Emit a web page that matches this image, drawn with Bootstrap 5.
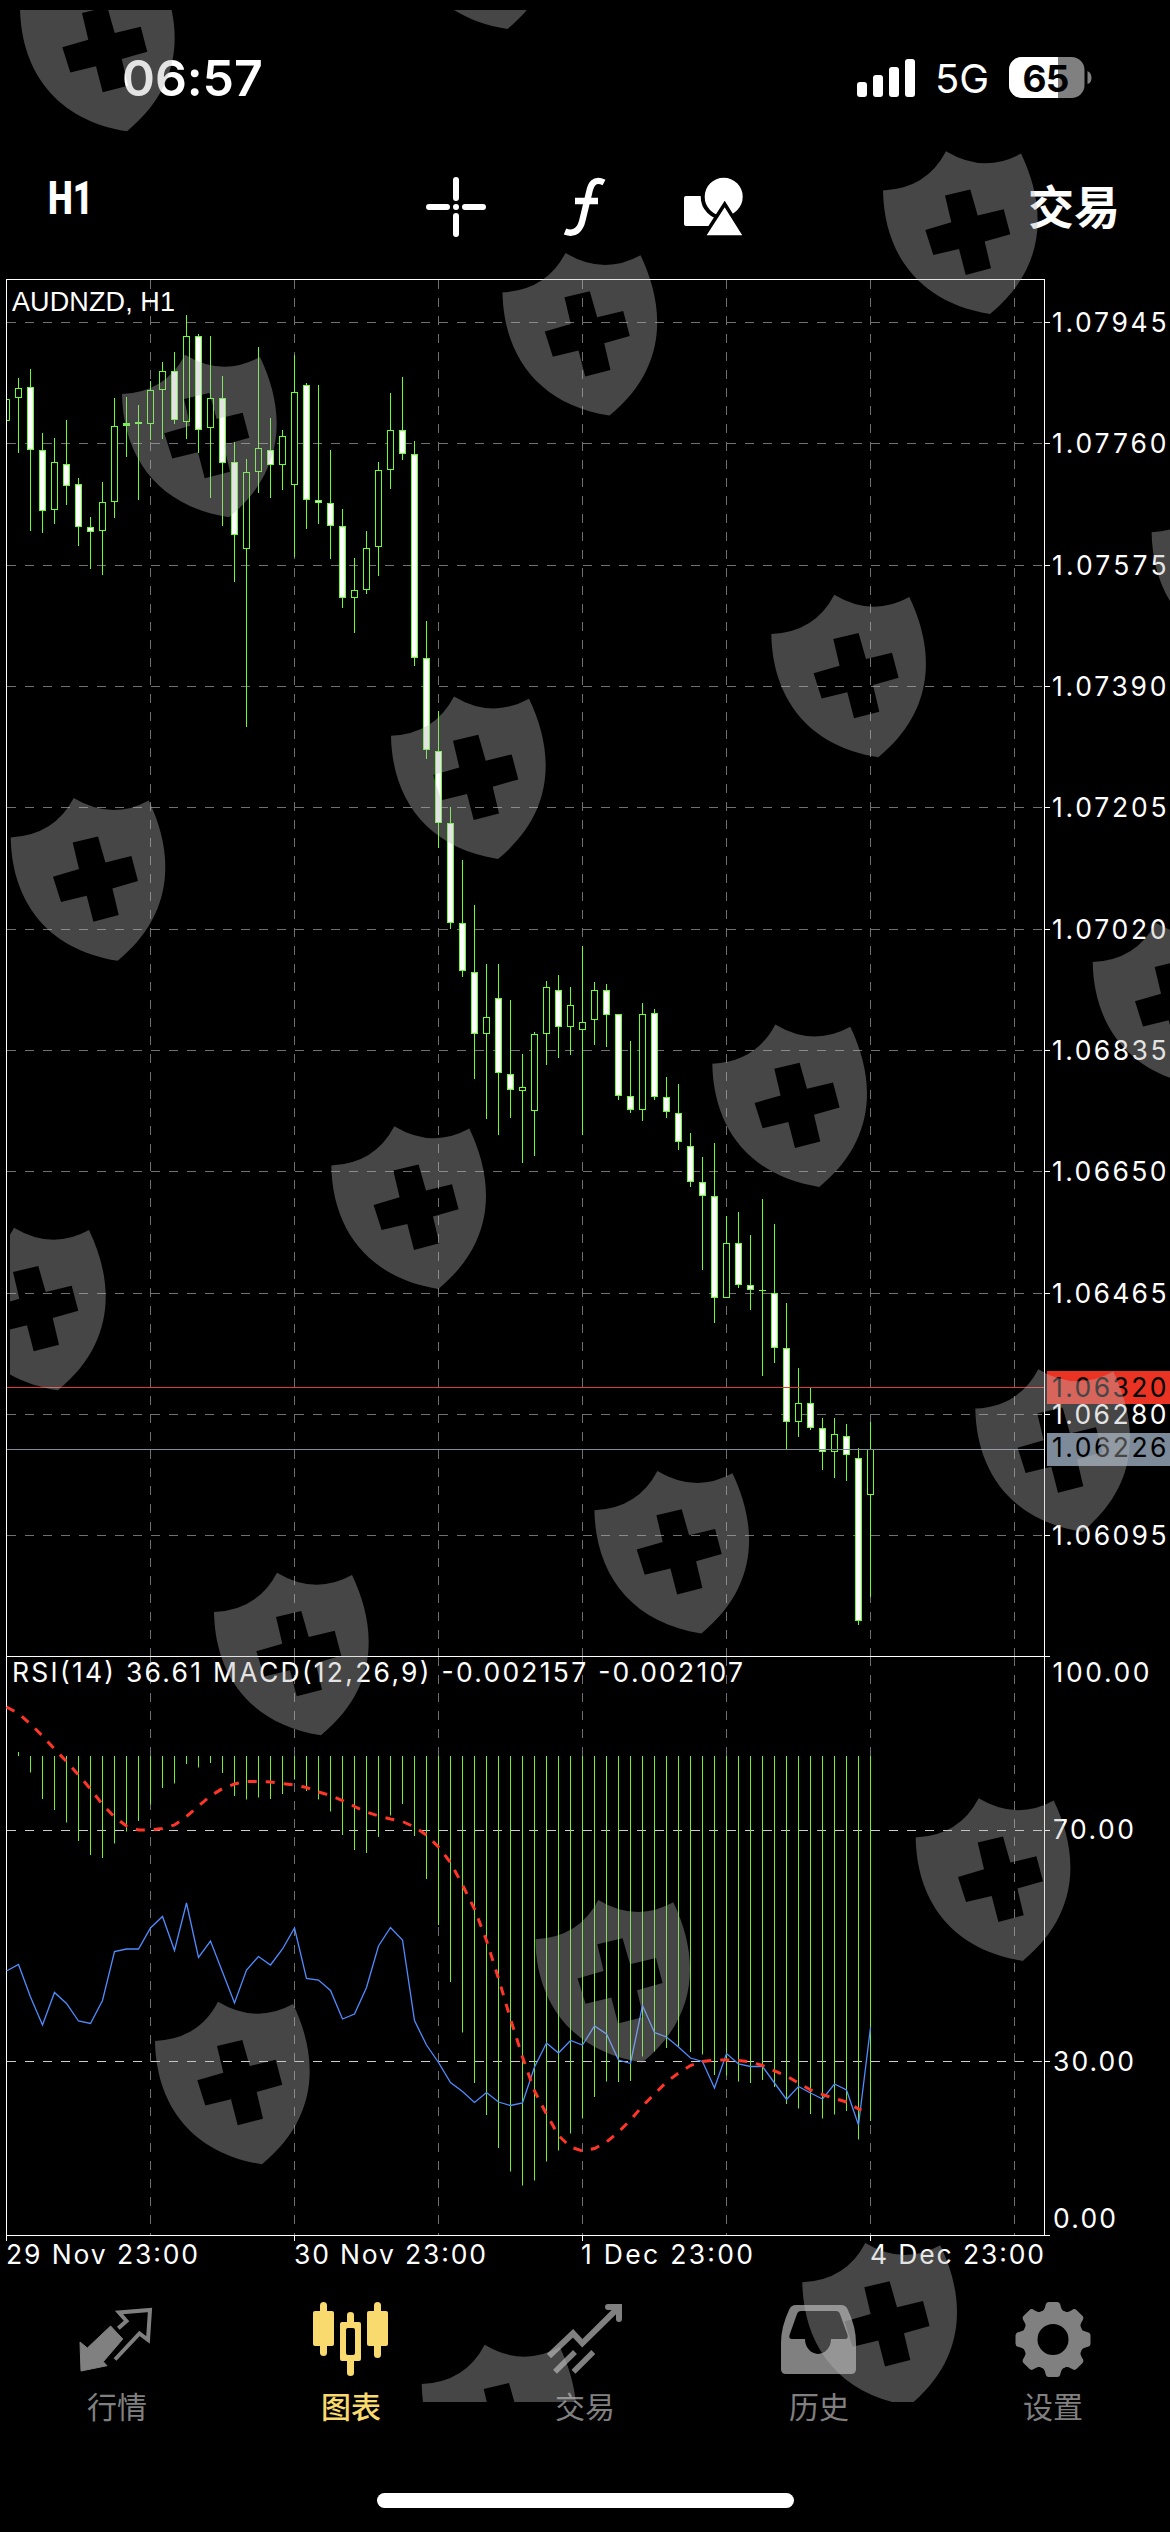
<!DOCTYPE html>
<html lang="zh-CN">
<head>
    <meta charset="UTF-8">
    <meta name="viewport" content="width=device-width, initial-scale=1.0">
    <title>AUDNZD, H1</title>
    <!-- Bootstrap CSS -->
    <link href="https://cdn.jsdelivr.net/npm/bootstrap@5.3.0/dist/css/bootstrap.min.css" rel="stylesheet">
    <style>
        body {
            width: 1170px;
            height: 2532px;
            background: #000;
            color: #fff;
            font-family: Inter, "Noto Sans CJK SC", sans-serif;
            overflow: hidden;
        }
        .status-bar {
            height: 140px;
            padding: 16px 78px 0 122px;
        }
        .clock {
            font-size: 50px;
            font-weight: 600;
            line-height: 1;
            letter-spacing: -0.1px;
        }
        .network {
            font-size: 40px;
            line-height: 1;
        }
        .toolbar {
            height: 134px;
            padding: 0 50px 0 48px;
        }
        .period {
            display: block;
            margin-top: -20px;
            overflow: visible;
        }
        .tools {
            gap: 69px;
            margin-left: 3px;
        }
        .trade-link {
            font-size: 46px;
            font-weight: 700;
            line-height: 1;
            color: #fff;
            text-decoration: none;
        }
        .chart-area {
            height: 2002px;
        }
        .chart-area svg {
            display: block;
        }
        .chart-area text {
            font-size: 26.5px;
            fill: #fff;
        }
        .chart-area .symbol-name {
            font-family: "Liberation Sans", sans-serif;
            font-size: 27px;
        }
        .chart-area .tag-text {
            fill: #000;
        }
        .tab-bar {
            height: 164px;
            padding-top: 25px;
        }
        .tab-bar a {
            width: 234px;
            color: #808080;
            font-size: 30px;
            line-height: 1;
            text-decoration: none;
            gap: 13px;
        }
        .tab-bar a.active {
            color: #f8da6f;
        }
        .tab-bar a.active span {
            font-weight: 500;
        }
        .home-bar {
            width: 417px;
            height: 15px;
            margin-top: 53px;
            background: #fff;
        }
        .shield-layer {
            left: 0;
            top: 0;
            pointer-events: none;
        }
    </style>
</head>
<body class="position-relative d-flex flex-column">
    <!-- Status Bar -->
    <div class="status-bar d-flex align-items-center justify-content-between">
        <div class="clock">06:57</div>
        <div class="d-flex align-items-center">
            <svg width="58" height="38" viewBox="0 0 58 38" fill="#fff" class="me-3">
                <rect x="0" y="23" width="10" height="15" rx="3"/>
                <rect x="16" y="16" width="10" height="22" rx="3"/>
                <rect x="32" y="8" width="10" height="30" rx="3"/>
                <rect x="48" y="0" width="10" height="38" rx="3"/>
            </svg>
            <svg width="58" height="50" viewBox="0 -6 58 50" class="ms-1 me-3"><text class="network" x="0" y="34" fill="#fff" textLength="54">5G</text></svg>
            <svg width="83" height="42" viewBox="0 0 83 42">
                <defs><clipPath id="cell"><rect width="75.500" height="41" rx="13"/></clipPath></defs>
                <g clip-path="url(#cell)">
                    <rect width="76" height="41" fill="#808080"/>
                    <rect width="49" height="41" fill="#fff"/>
                </g>
                <path d="M78.500 14q4 2 4 7t-4 6z" fill="#808080"/>
                <text x="37" y="34.500" font-size="37" font-weight="700" text-anchor="middle" textLength="47" fill="#000">65</text>
            </svg>
        </div>
    </div>

    <!-- Chart Toolbar -->
    <div class="toolbar d-flex align-items-center justify-content-between">
        <svg class="period" width="90" height="36"><text x="0" y="35" font-family="Roboto" font-weight="900" font-size="47" textLength="45" lengthAdjust="spacingAndGlyphs" fill="#fff">H1</text></svg>
        <div class="tools d-flex align-items-center">
            <svg width="60" height="60" viewBox="0 0 60 60" stroke="#fff" stroke-width="6" stroke-linecap="round">
                <path d="M30 3v18M30 39v18M3 30h18M39 30h18M30 30h.01"/>
            </svg>
            <svg width="60" height="60" viewBox="-9 0 60 60" fill="none" stroke="#fff" stroke-width="6.400">
                <path d="M40 5.500C30 .5 26.500 8 25 16L18.500 43C16.500 52 11 58.500 1 54.500M11 24h23"/>
            </svg>
            <svg width="60" height="60" viewBox="0 -1 60 60" fill="#fff" stroke="#000">
                <rect x="0" y="18" width="31" height="30" rx="2" stroke="none"/>
                <circle cx="39.700" cy="18.700" r="21" stroke-width="4"/>
                <path d="M41.300 26L20 59H62z" stroke-width="3.500" transform="translate(-.6 0)"/>
            </svg>
        </div>
        <a href="#" class="trade-link">交易</a>
    </div>

    <!-- Chart -->
    <div class="chart-area">
        <svg id="chart" width="1170" height="2002" viewBox="0 274 1170 2002"></svg>
    </div>

    <!-- Tab Bar -->
    <nav class="tab-bar d-flex">
        <a href="#" class="d-flex flex-column align-items-center">
            <svg width="76" height="78" viewBox="0 0 76 78">
                <path fill="currentColor" d="M31.600 25l12.200 13-19.500 22.700L28 64.700 2 70 1 41l7.300 6z" stroke="currentColor" stroke-width="1" stroke-linejoin="round"/>
                <path fill="none" stroke="currentColor" stroke-width="4" d="M39.300 27.300l8.200-7.300L40 11.500 71 9l-2 30-8.500-6.500L36 58.500"/>
            </svg>
            <span>行情</span>
        </a>
        <a href="#" class="active d-flex flex-column align-items-center">
            <svg width="76" height="78" viewBox="0 0 76 78" fill="currentColor">
                <rect x="0" y="10" width="21" height="35" rx="2"/>
                <rect x="7" y="1" width="7" height="54" rx="3.500"/>
                <rect x="54" y="10" width="21" height="35" rx="2"/>
                <rect x="61" y="1" width="7" height="56" rx="3.500"/>
                <path fill-rule="evenodd" d="M29 21h17q2 0 2 2v35q0 2-2 2H29q-2 0-2-2V23q0-2 2-2zm6 6q-2 0-2 2v23q0 2 2 2h5q2 0 2-2V29q0-2-2-2z"/>
                <path d="M34 22v-8q0-3 3.500-3t3.500 3v8zM34 60v12q0 3 3.500 3t3.500-3V60z"/>
            </svg>
            <span>图表</span>
        </a>
        <a href="#" class="d-flex flex-column align-items-center">
            <svg width="76" height="78" viewBox="0 0 76 78" fill="none" stroke="currentColor" stroke-width="6">
                <path d="M2 55l24-22.700 9.300 10L71 7"/>
                <path d="M61 6h11v12" stroke-linecap="round" stroke-linejoin="miter"/>
                <path d="M28 51L8 70.700M46.300 51L26.500 70.700" stroke-width="5.500"/>
            </svg>
            <span>交易</span>
        </a>
        <a href="#" class="d-flex flex-column align-items-center">
            <svg width="76" height="78" viewBox="0 0 76 78">
                <path fill="currentColor" fill-rule="evenodd" d="M15 4H60Q65 4 67 9Q75 26 75 42V68Q75 73 70 73H5Q0 73 0 68V42Q0 26 8 9Q10 4 15 4ZM20 10Q17 10 16 13L8.500 34Q7.500 38 11 38H24A13 15 0 0 0 50 38H64Q67.500 38 66.500 34L59 13Q58 10 55 10Z"/>
            </svg>
            <span>历史</span>
        </a>
        <a href="#" class="d-flex flex-column align-items-center">
            <svg width="76" height="78" viewBox="-38 -38.500 76 78">
                <circle r="23" fill="none" stroke="currentColor" stroke-width="15"/>
                <g fill="currentColor">
                    <path id="tooth" d="M-12-27Q-8.500-29-7.500-34Q-7-37.500-4-37.500H4Q7-37.500 7.500-34Q8.500-29 12-27L10-20H-10z"/>
                    <use href="#tooth" transform="rotate(45)"/>
                    <use href="#tooth" transform="rotate(90)"/>
                    <use href="#tooth" transform="rotate(135)"/>
                    <use href="#tooth" transform="rotate(180)"/>
                    <use href="#tooth" transform="rotate(225)"/>
                    <use href="#tooth" transform="rotate(270)"/>
                    <use href="#tooth" transform="rotate(315)"/>
                </g>
            </svg>
            <span>设置</span>
        </a>
    </nav>
    <div class="home-bar rounded-pill mx-auto"></div>

    <!-- Shield overlay, lies over the whole screen -->
    <svg id="shields" class="shield-layer position-absolute" width="1170" height="2532">
        <defs>
            <clipPath id="shieldClip"><rect x="10" y="10" width="1160" height="2392"/></clipPath>
            <path id="shield" fill-rule="evenodd" d="M0 0Q43.700-2 63-39.300Q101-16.500 138-37C162.500 14 166 75 107 123.300C35 112 1 62 0 0ZM62 5L68.300 31.700 42.300 39.300 50.300 64.500 76 58.300 82.700 84.300 108 77.700 101.700 51 127.300 43.700 120.700 18.700 94.700 25 87.300-1Z"/>
        </defs>
        <g id="shieldGroup" clip-path="url(#shieldClip)" fill="#b6b6b6" fill-opacity="0.385"></g>
    </svg>

    <!-- Bootstrap JS -->
    <script src="https://cdn.jsdelivr.net/npm/bootstrap@5.3.0/dist/js/bootstrap.bundle.min.js"></script>
    <script>
        const NS = 'http://www.w3.org/2000/svg';
        const chart = document.getElementById('chart');

        function add(parent, name, attrs, text) {
            const el = document.createElementNS(NS, name);
            for (const key in attrs) el.setAttribute(key, attrs[key]);
            if (text) el.textContent = text;
            parent.appendChild(el);
            return el;
        }

        function line(x1, y1, x2, y2, color, dash) {
            const attrs = { x1, y1, x2, y2, stroke: color, 'stroke-width': 1 };
            if (dash) attrs['stroke-dasharray'] = dash;
            add(chart, 'line', attrs);
        }

        // x position of bar number i
        const barX = i => 6.5 + 12 * i;

        // [high, body top, body bottom, low, filled]
        const candles = [
            [399,399,421,421,0],[378,388,398,453,0],[369,387,450,531,1],[433,450,511,533,1],[438,462,510,524,0],
            [420,464,486,505,1],[478,484,527,546,1],[517,527,532,569,1],[482,502,531,575,0],[398,426,502,518,0],
            [397,423,426,457,2],[405,422,424,500,2],[381,390,424,440,0],[362,371,390,439,0],[352,371,420,424,1],
            [315,336,422,439,0],[334,336,430,453,1],[336,398,428,498,0],[376,398,463,526,1],[442,462,535,582,1],
            [459,472,549,727,0],[347,448,472,493,0],[418,450,465,498,1],[430,436,465,490,0],[355,392,485,557,0],
            [383,385,500,529,1],[385,500,503,524,1],[450,503,526,559,1],[509,526,598,608,1],[558,590,598,633,0],
            [531,548,590,594,0],[462,470,547,576,0],[393,430,470,489,0],[377,430,454,460,1],[441,454,658,666,1],
            [621,658,750,759,1],[711,751,823,848,1],[807,823,923,929,1],[860,923,971,977,1],[905,972,1034,1079,1],
            [964,1017,1034,1119,0],[964,998,1073,1135,1],[1000,1074,1090,1118,1],[1054,1087,1091,1163,0],[1032,1034,1111,1156,0],
            [981,987,1034,1065,0],[975,990,1027,1058,1],[987,1005,1027,1055,0],[946,1022,1030,1135,0],[982,990,1020,1045,0],
            [984,990,1015,1047,1],[1014,1014,1096,1100,1],[1041,1096,1110,1113,1],[1003,1014,1110,1121,0],[1009,1013,1097,1100,1],
            [1077,1097,1112,1118,1],[1084,1113,1142,1150,1],[1133,1146,1182,1187,1],[1157,1182,1196,1270,1],[1143,1196,1298,1323,1],
            [1216,1243,1298,1298,0],[1212,1243,1285,1288,1],[1235,1285,1290,1310,1],[1199,1290,1291,1376,2],[1224,1293,1348,1363,1],
            [1303,1348,1422,1450,1],[1368,1403,1422,1437,0],[1388,1403,1428,1430,1],[1418,1428,1452,1470,1],[1418,1434,1452,1478,0],
            [1424,1436,1455,1481,1],[1448,1458,1621,1625,1],[1422,1449,1495,1597,0]
        ];

        // Bottom ends of the MACD bars, starting from bar 1
        const macd = [
            1752,1772.5,1799,1810,1822.5,1841,1855,1858,1843.5,1831.5,1821,1804.5,1788,1783.5,1764,1767.5,1763,1773,
            1796,1799.5,1797.5,1799,1794,1779.5,1791,1799.5,1811.5,1835,1850,1853,1837,1815.5,1804,1836,1879,1925,
            1982,2032.5,2083,2115,2148,2171.5,2185.5,2180.5,2161.5,2150.5,2133.5,2118.5,2097,2081.5,2082,2081,2056.5,2051.5,
            2048,2046.5,2052,2054.5,2075,2075.5,2081.5,2083,2080,2087,2104,2108.5,2114,2118.5,2114.5,2111,2139.5,2121
        ];

        const rsi = [
            1971,1964.5,1997,2025,1992.5,2003.5,2021,2023.5,2000.5,1951.5,1949,1949,1928,1916.5,1950.5,1903,1957.5,1941,
            1972,2003,1970,1956.5,1965,1949,1928,1978.5,1980,1990.5,2019,2014,1987.5,1946,1927.5,1940,2020.5,2045,2062.5,
            2082.5,2091.5,2102.5,2092.5,2102,2105.5,2103,2067,2043,2053,2040.5,2045,2026,2034,2060,2063.5,2005.5,2032.5,
            2037,2047,2058,2061.5,2088,2053.5,2064,2066.5,2066.5,2083,2099.5,2086.5,2093,2099,2084,2090,2125,2027.5
        ];

        const signal = [
            1707,1713.5,1724,1736,1749,1761.5,1775,1789,1804.5,1817,1826,1830,1830,1828.5,1825,1816.5,1806,1796,
            1788.5,1784,1781.5,1781.5,1782,1783.5,1785,1787.5,1792,1795.5,1800.5,1806.5,1812,1816,1819,1821.5,1827,1835,1847,
            1862.5,1885,1909,1940.5,1978.5,2019,2057,2091,2114,2135.5,2147,2151,2148.5,2142,2132,2120,2106,2094,
            2082,2073,2065.5,2061.5,2060,2060,2060.5,2062,2065.5,2071,2076,2083,2090,2094.5,2098.5,2102,2109
        ];

        // Grid
        const prices = ['1.07945', '1.07760', '1.07575', '1.07390', '1.07205', '1.07020', '1.06835', '1.06650', '1.06465', '1.06280', '1.06095'];
        const priceY = [322.5, 443.5, 565.5, 686.5, 807.5, 929.5, 1050.5, 1171.5, 1293.5, 1414.5, 1535.5];
        for (let x = 150.5; x < 1044; x += 144) {
            line(x, 280, x, 1657, '#707070', '9 9');
            line(x, 1657, x, 2235, '#707070', '9 9');
        }
        priceY.forEach(y => line(7, y, 1044, y, '#707070', '9 9'));
        [1830.5, 2061.5].forEach(y => line(7, y, 1044, y, '#ccc', '9 9'));

        // Frame and separators
        add(chart, 'rect', { x: 6.5, y: 279.5, width: 1038, height: 1956, fill: 'none', stroke: '#fff' });
        line(7, 1656.5, 1044, 1656.5, '#fff');
        line(6, 2235.5, 1045, 2235.5, '#fff');

        // Candles
        candles.forEach(([high, top, bottom, low, filled], i) => {
            const x = barX(i);
            const green = '#66ff33';
            if (i === 0) {
                add(chart, 'path', { d: `M7 ${top + .5}H9.500V${bottom - .5}H7`, fill: 'none', stroke: green });
                return;
            }
            if (high < top) line(x, high, x, top, green);
            if (low > bottom) line(x, bottom, x, low, green);
            add(chart, 'rect', {
                x: x - 3, y: top + .5, width: 6, height: Math.max(bottom - top - 1, .01),
                fill: filled === 2 ? green : filled ? '#fff' : '#000', stroke: green
            });
        });

        // Ask and bid levels
        line(7, 1387.5, 1044, 1387.5, '#e03a2c');
        line(7, 1449.5, 1044, 1449.5, '#808c99');

        // MACD, RSI and signal line
        macd.forEach((y, i) => line(barX(i + 1), 1756, barX(i + 1), y, '#6cf22e'));
        add(chart, 'polyline', {
            points: rsi.map((y, i) => `${barX(i)},${y}`).join(' '),
            fill: 'none', stroke: '#4f8cff', 'stroke-width': 1.3
        });
        add(chart, 'polyline', {
            points: signal.map((y, i) => `${barX(i)},${y}`).join(' ') + ' 861.5,2110',
            fill: 'none', stroke: '#ff352a', 'stroke-width': 3, 'stroke-dasharray': '9 9'
        });

        // Labels; every one is fitted to its width
        function label(x, y, width, text, cls) {
            add(chart, 'text', { x, y, textLength: width, class: cls || '' }, text);
        }
        prices.forEach((text, i) => {
            line(1045, priceY[i], 1050, priceY[i], '#fff');
            label(1052, priceY[i] + 9, 114.5, text);
        });
        [1656.5, 1830.5, 2061.5, 2235.5].forEach(y => line(1045, y, 1050, y, '#fff'));
        [6.5, 294.5, 582.5, 870.5].forEach(x => line(x, 2236, x, 2241, '#fff'));
        label(1052.5, 1682, 97, '100.00');
        label(1053, 1839, 81, '70.00');
        label(1053, 2071, 81, '30.00');
        label(1053, 2228, 63, '0.00');
        label(6, 2264, 192, '29 Nov 23:00');
        label(294, 2264, 192, '30 Nov 23:00');
        label(581, 2264, 172, '1 Dec 23:00');
        label(870, 2264, 174, '4 Dec 23:00');
        label(12, 311, 163, 'AUDNZD, H1', 'symbol-name');
        label(12, 1682, 731, 'RSI(14) 36.61 MACD(12,26,9) -0.002157 -0.002107');

        add(chart, 'rect', { x: 1047, y: 1371, width: 123, height: 33, fill: '#eb3323' });
        add(chart, 'rect', { x: 1047, y: 1433, width: 123, height: 33, fill: '#7c8a99' });
        label(1052, 1397, 114.5, '1.06320', 'tag-text');
        label(1052, 1457, 114.5, '1.06226', 'tag-text');

        // Shields, each placed by its left corner
        const shields = [
            [20,8],[400.3,-94.3],[122,394],[502.5,292.3],[883,190.6],[10.7,837.4],[391,735.7],[771.3,634],[1151.6,532.3],
            [-49,1267],[331.3,1165.6],[712.3,1063.7],[1092.7,962],[214,1612],[594.4,1510.2],[975.3,1408.5],
            [155,2041],[535.3,1939.3],[915.7,1837.6],[421.7,2384],[802.3,2282.3]
        ];
        const group = document.getElementById('shieldGroup');
        shields.forEach(([x, y]) => add(group, 'use', { href: '#shield', x, y }));
    </script>
</body>
</html>
